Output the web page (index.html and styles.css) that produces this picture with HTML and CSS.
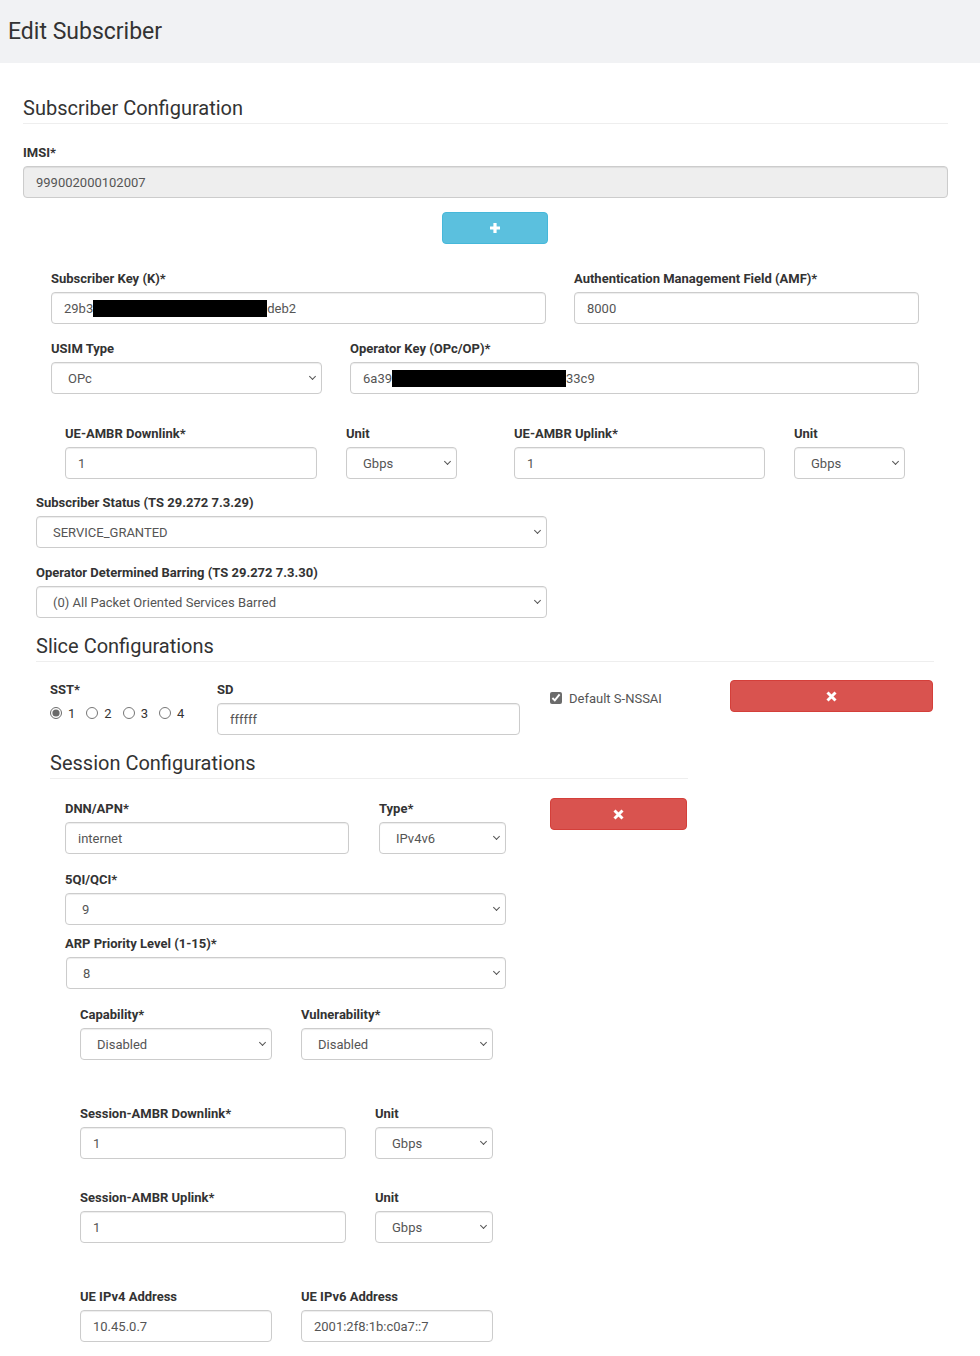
FILE: index.html
```html
<!DOCTYPE html>
<html lang="en">
<head>
    <meta charset="UTF-8">
    <meta name="viewport" content="width=device-width, initial-scale=1.0">
    <title>Edit Subscriber</title>
    <link rel="stylesheet" href="styles.css">
</head>
<body>
    <header class="page-header">
        <h1>Edit Subscriber</h1>
    </header>

    <form class="subscriber-form">
        <h2 class="section-title">Subscriber Configuration</h2>

        <div class="field field-imsi">
            <label>IMSI*</label>
            <input class="form-control" type="text" value="999002000102007" readonly>
        </div>

        <button type="button" class="btn btn-add" title="Add">
            <svg width="12" height="12" viewBox="0 0 12 12"><path d="M6 1v10M1 6h10" stroke="#fff" stroke-width="3.2"/></svg>
        </button>

        <!-- Security keys -->
        <div class="row row-keys">
            <div class="field">
                <label>Subscriber Key (K)*</label>
                <div class="form-control">29b3<span class="redacted"></span>deb2</div>
            </div>
            <div class="field">
                <label>Authentication Management Field (AMF)*</label>
                <input class="form-control" type="text" value="8000">
            </div>
        </div>

        <div class="row row-usim">
            <div class="field">
                <label>USIM Type</label>
                <div class="select-wrap">
                    <select class="form-control"><option>OPc</option><option>OP</option></select>
                </div>
            </div>
            <div class="field">
                <label>Operator Key (OPc/OP)*</label>
                <div class="form-control">6a39<span class="redacted"></span>33c9</div>
            </div>
        </div>

        <!-- UE-AMBR -->
        <div class="row row-ambr">
            <div class="field">
                <label>UE-AMBR Downlink*</label>
                <input class="form-control" type="text" value="1">
            </div>
            <div class="field">
                <label>Unit</label>
                <div class="select-wrap">
                    <select class="form-control"><option>Gbps</option><option>Mbps</option></select>
                </div>
            </div>
            <div class="field uplink">
                <label>UE-AMBR Uplink*</label>
                <input class="form-control" type="text" value="1">
            </div>
            <div class="field">
                <label>Unit</label>
                <div class="select-wrap">
                    <select class="form-control"><option>Gbps</option><option>Mbps</option></select>
                </div>
            </div>
        </div>

        <div class="field field-status">
            <label>Subscriber Status (TS 29.272 7.3.29)</label>
            <div class="select-wrap">
                <select class="form-control"><option>SERVICE_GRANTED</option><option>OPERATOR_DETERMINED_BARRING</option></select>
            </div>
        </div>

        <div class="field field-odb">
            <label>Operator Determined Barring (TS 29.272 7.3.30)</label>
            <div class="select-wrap">
                <select class="form-control"><option>(0) All Packet Oriented Services Barred</option></select>
            </div>
        </div>

        <!-- Slices -->
        <h2 class="section-title slice-title">Slice Configurations</h2>

        <div class="row row-slice">
            <div class="field">
                <label>SST*</label>
                <div class="radio-group">
                    <label class="radio"><input type="radio" name="sst" checked>1</label>
                    <label class="radio"><input type="radio" name="sst">2</label>
                    <label class="radio"><input type="radio" name="sst">3</label>
                    <label class="radio"><input type="radio" name="sst">4</label>
                </div>
            </div>
            <div class="field">
                <label>SD</label>
                <input class="form-control" type="text" value="ffffff">
            </div>
            <label class="checkbox"><input type="checkbox" checked> Default S-NSSAI</label>
            <button type="button" class="btn btn-remove" title="Remove slice">
                <svg width="11" height="11" viewBox="0 0 11 11"><path d="M1.5 1.5l8 8M9.5 1.5l-8 8" stroke="#fff" stroke-width="3"/></svg>
            </button>
        </div>

        <h2 class="section-title session-title">Session Configurations</h2>

        <div class="row row-dnn">
            <div class="field">
                <label>DNN/APN*</label>
                <input class="form-control" type="text" value="internet">
            </div>
            <div class="field">
                <label>Type*</label>
                <div class="select-wrap">
                    <select class="form-control"><option>IPv4v6</option><option>IPv4</option><option>IPv6</option></select>
                </div>
            </div>
            <button type="button" class="btn btn-remove" title="Remove session">
                <svg width="11" height="11" viewBox="0 0 11 11"><path d="M1.5 1.5l8 8M9.5 1.5l-8 8" stroke="#fff" stroke-width="3"/></svg>
            </button>
        </div>

        <div class="field field-qci">
            <label>5QI/QCI*</label>
            <div class="select-wrap">
                <select class="form-control"><option>9</option></select>
            </div>
        </div>

        <div class="field field-arp">
            <label>ARP Priority Level (1-15)*</label>
            <div class="select-wrap">
                <select class="form-control"><option>8</option></select>
            </div>
        </div>

        <div class="row row-pair row-arp">
            <div class="field">
                <label>Capability*</label>
                <div class="select-wrap">
                    <select class="form-control"><option>Disabled</option><option>Enabled</option></select>
                </div>
            </div>
            <div class="field">
                <label>Vulnerability*</label>
                <div class="select-wrap">
                    <select class="form-control"><option>Disabled</option><option>Enabled</option></select>
                </div>
            </div>
        </div>

        <div class="row row-session-ambr row-dl">
            <div class="field">
                <label>Session-AMBR Downlink*</label>
                <input class="form-control" type="text" value="1">
            </div>
            <div class="field">
                <label>Unit</label>
                <div class="select-wrap">
                    <select class="form-control"><option>Gbps</option><option>Mbps</option></select>
                </div>
            </div>
        </div>

        <div class="row row-session-ambr row-ul">
            <div class="field">
                <label>Session-AMBR Uplink*</label>
                <input class="form-control" type="text" value="1">
            </div>
            <div class="field">
                <label>Unit</label>
                <div class="select-wrap">
                    <select class="form-control"><option>Gbps</option><option>Mbps</option></select>
                </div>
            </div>
        </div>

        <div class="row row-pair row-ip">
            <div class="field">
                <label>UE IPv4 Address</label>
                <input class="form-control" type="text" value="10.45.0.7">
            </div>
            <div class="field">
                <label>UE IPv6 Address</label>
                <input class="form-control" type="text" value="2001:2f8:1b:c0a7::7">
            </div>
        </div>
    </form>
</body>
</html>
```

FILE: styles.css
```css
:root {
    --text-color: #333;
    --input-text: #555;
    --border: #ccc;
    --rule: #eee;
    --info: #5bc0de;
    --danger: #d9534f;
}

* {
    box-sizing: border-box;
}

body {
    margin: 0;
    font-family: Roboto, 'Liberation Sans', sans-serif;
    color: var(--text-color);
    background: #fff;
}

.page-header {
    height: 63px;
    background: #f1f2f4;
    display: flex;
    align-items: center;
    padding-left: 8px;
}

.page-header h1 {
    margin: 0;
    font-size: 23px;
    font-weight: 400;
}

.subscriber-form {
    padding: 33px 32px 40px 23px;
}

.section-title {
    margin: 0 0 20px;
    font-size: 20px;
    font-weight: 400;
    line-height: 24px;
    padding-bottom: 3px;
    border-bottom: 1px solid var(--rule);
}

.field > label {
    display: block;
    font-size: 13px;
    font-weight: 700;
    line-height: 18px;
    margin-bottom: 4px;
}

.form-control {
    display: block;
    width: 100%;
    height: 32px;
    padding: 0 12px;
    font-family: Roboto, 'Liberation Sans', sans-serif;
    font-size: 13px;
    color: var(--input-text);
    background: #fff;
    border: 1px solid var(--border);
    border-radius: 4px;
    box-shadow: inset 0 1px 1px rgba(0, 0, 0, 0.075);
}

div.form-control {
    display: flex;
    align-items: center;
}

input[readonly].form-control {
    background: #eee;
}

/* selects: custom chevron drawn over the right edge */
.select-wrap {
    position: relative;
}

.select-wrap select.form-control {
    appearance: none;
    -webkit-appearance: none;
    padding-left: 16px;
    padding-right: 24px;
}

.select-wrap::after {
    content: '';
    position: absolute;
    right: 7px;
    top: 12px;
    width: 4px;
    height: 4px;
    border-right: 1.4px solid #555;
    border-bottom: 1.4px solid #555;
    transform: rotate(45deg);
    pointer-events: none;
}

.redacted {
    display: inline-block;
    width: 174px;
    height: 17px;
    background: #000;
}

.btn {
    display: flex;
    align-items: center;
    justify-content: center;
    height: 32px;
    border-radius: 4px;
    cursor: pointer;
    padding: 0;
}

.btn-add {
    width: 106px;
    margin: 14px 0 0 419px;
    background: var(--info);
    border: 1px solid #46b8da;
}

.btn-remove {
    background: var(--danger);
    border: 1px solid #d43f3a;
}

.row {
    display: grid;
    align-items: start;
}

.row-keys {
    margin: 26px 0 0 28px;
    grid-template-columns: 495px 345px;
    column-gap: 28px;
}

.row-usim {
    margin: 16px 0 0 28px;
    grid-template-columns: 271px 569px;
    column-gap: 28px;
}

.row-ambr {
    margin: 31px 0 0 42px;
    grid-template-columns: 252px 111px 279px 111px;
    column-gap: 29px;
}

.row-ambr .uplink {
    padding-left: 28px;
}

.field-status,
.field-odb {
    margin-left: 13px;
    width: 511px;
}

.field-status {
    margin-top: 15px;
}

.field-odb {
    margin-top: 16px;
}

.slice-title {
    margin: 16px 0 19px 13px;
    width: 898px;
}

.row-slice {
    margin-left: 27px;
    grid-template-columns: 167px 303px 210px 203px;
    column-gap: 0;
}

.row-slice .btn-remove {
    margin-top: -1px;
}

.radio-group {
    display: flex;
    align-items: center;
    height: 20px;
    font-size: 13px;
}

.radio {
    display: flex;
    align-items: center;
    gap: 6px;
    margin-right: 11px;
}

.radio input {
    width: 12px;
    height: 12px;
}

.radio input,
.checkbox input {
    margin: 0;
    accent-color: #6b6b6b;
}

.checkbox {
    display: flex;
    align-items: center;
    gap: 7px;
    margin: 7px 0 0 30px;
    height: 20px;
    font-size: 13px;
    color: var(--input-text);
}

.checkbox input {
    width: 12px;
    height: 12px;
}

.session-title {
    margin: 16px 0 21px 27px;
    width: 638px;
}

.row-dnn {
    margin-left: 42px;
    grid-template-columns: 284px 127px 151px;
    column-gap: 30px;
}

.row-dnn .btn-remove {
    margin: -2px 0 0 14px;
}

.field-qci,
.field-arp {
    margin-left: 42px;
    width: 441px;
}

.field-qci {
    margin-top: 17px;
}

.field-arp {
    margin-top: 10px;
}

.field-arp .select-wrap {
    margin-left: 1px;
}

.row-pair {
    margin-left: 57px;
    grid-template-columns: 192px 192px;
    column-gap: 29px;
}

.row-arp {
    margin-top: 17px;
}

.row-session-ambr {
    margin-left: 57px;
    grid-template-columns: 266px 118px;
    column-gap: 29px;
}

.row-dl {
    margin-top: 45px;
}

.row-ul {
    margin-top: 30px;
}

.row-ip {
    margin-top: 45px;
}
```
